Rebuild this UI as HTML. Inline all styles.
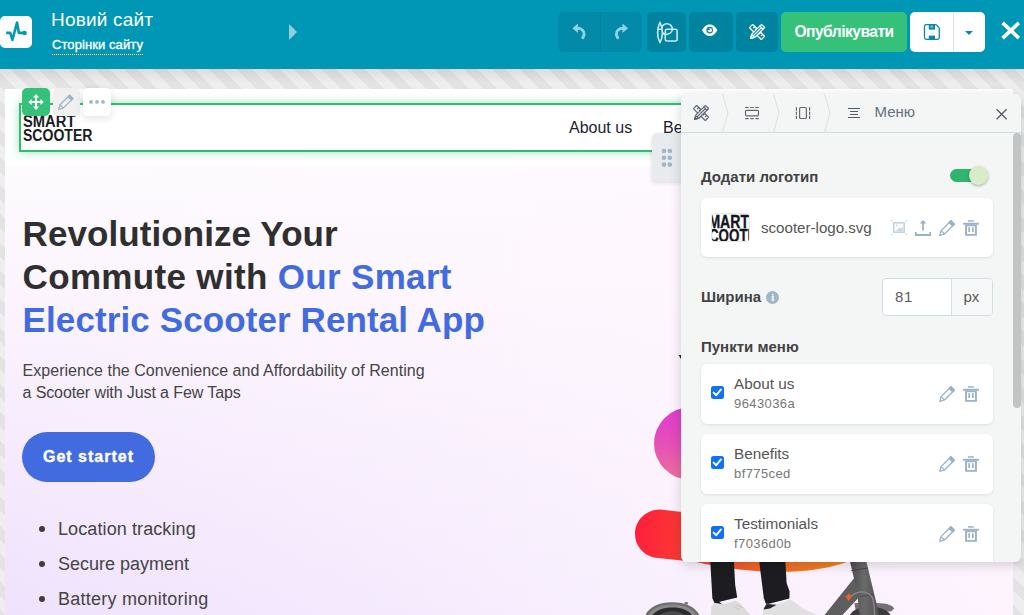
<!DOCTYPE html>
<html lang="uk">
<head>
<meta charset="utf-8">
<title>Новий сайт</title>
<style>
*{box-sizing:border-box;margin:0;padding:0}
html,body{width:1024px;height:615px;overflow:hidden}
body{position:relative;font-family:"Liberation Sans",sans-serif;background:#e9e9e9;color:#333}
.abs{position:absolute}
svg{display:block;overflow:visible}

/* ---------- striped canvas ---------- */
#canvas{left:0;top:69px;width:1024px;height:555.2px;
  background:repeating-linear-gradient(45deg,#e3e3e3 0 10px,#eeeeee 10px 20px)}
#canvas-shade{left:0;top:69px;width:1024px;height:14px;
  background:linear-gradient(180deg,rgba(0,0,0,.075),rgba(0,0,0,0))}

/* ---------- top bar ---------- */
#topbar{left:0;top:0;width:1024px;height:69px;background:#0097b7}
#brand{left:0;top:16px;width:32px;height:32px;background:#fff;border-radius:5px}
#site-title{left:51px;top:9px;font-size:19px;line-height:22px;color:#fff;white-space:nowrap;letter-spacing:.2px}
#site-pages{left:52px;top:37px;font-size:13px;line-height:15px;color:#fff;white-space:nowrap;
  letter-spacing:.08px;-webkit-text-stroke:.35px #fff}
#site-pages-line{left:52px;top:54px;width:91px;height:0;border-top:1px dotted #fff}
#tri{left:289px;top:24px;width:0;height:0;border-left:8px solid #8fd0df;border-top:8px solid transparent;border-bottom:8px solid transparent}
.tb{top:12px;height:40px;border-radius:5px}
#b-undo{left:558px;width:84px;background:#028aa8}
#b-undo-div{left:600px;top:12px;width:1px;height:40px;background:#02819d}
#b-theme{left:647px;width:39px;background:#00839f}
#b-eye{left:689px;width:44px;background:#00839f}
#b-design{left:736px;width:42px;background:#00839f}
#b-pub{left:781px;width:126px;background:#36c17a;color:#fff;font-weight:bold;font-size:15.6px;line-height:39px;
  text-align:center;letter-spacing:-.52px;padding-left:0}
#b-save{left:910px;width:75px;background:#fff}
#b-save-div{left:953px;top:13px;width:1px;height:38px;background:#dfe3e6}
#caret{left:965px;top:31px;width:0;height:0;border-top:4.5px solid #0a88a6;border-left:4.5px solid transparent;border-right:4.5px solid transparent}

/* ---------- page ---------- */
#page{left:5px;top:89px;width:1008px;height:526px;background:#fff;overflow:hidden}
#hero{left:0;top:77px;width:1008px;height:449px;
  background:linear-gradient(90deg,rgba(255,248,254,0) 0%,rgba(255,248,254,.58) 60%,rgba(255,247,254,.85) 100%),
    linear-gradient(180deg,#fdfbfe 0%,#fbf4fd 30%,#f6ebfd 62%,#efe2fd 100%)}
#sel{left:19px;top:103px;width:680px;height:49px;border:2px solid #2fbf71;background:#fff;
  box-shadow:0 0 9px rgba(47,191,113,.45)}
#logo{left:22.9px;top:115.2px;font-weight:bold;font-size:15.8px;line-height:13.5px;color:#1b1b25;white-space:nowrap}
#logo span{display:block;transform-origin:0 0}
.nav{top:118px;font-size:16px;line-height:19px;color:#1d1d33;white-space:nowrap}
#h1{left:22.6px;top:211.6px;font-weight:bold;font-size:35px;line-height:43.2px;color:#2f2f2f;white-space:nowrap}
#h1 span{display:block}
#h1 b{color:#436be0}
#lead{left:22.5px;top:359.5px;font-size:16px;line-height:22px;color:#444;white-space:nowrap}
#cta{left:22px;top:432px;width:133px;height:49.5px;border-radius:25px;background:#436be0;color:#fff;
  font-weight:bold;font-size:16px;line-height:49px;text-align:center;letter-spacing:1px;-webkit-text-stroke:.4px #fff}
#feat{left:58px;top:511.5px;font-size:18px;line-height:35px;color:#444;white-space:nowrap;list-style:none}
.dot{left:38.5px;width:6px;height:6px;border-radius:50%;background:#3d3d3d}

/* ---------- toolbar over block ---------- */
#t-move{left:22px;top:88px;width:28px;height:28px;border-radius:5px;background:#36c17a}
#t-edit{left:53px;top:88px;width:27px;height:28px;border-radius:5px;background:#f0f0f0}
#t-more{left:83px;top:88px;width:28px;height:28px;border-radius:5px;background:#fff;box-shadow:0 2px 8px rgba(0,0,0,.12)}

/* ---------- side panel ---------- */
#handle{left:652px;top:133px;width:34px;height:48.7px;border-radius:6px 0 0 3px;background:#e7ebed;
  box-shadow:0 1px 4px rgba(0,0,0,.13)}
#panel{left:681px;top:94px;width:340px;height:468px;border-radius:6px;background:#f4f6f6;overflow:hidden;
  box-shadow:0 3px 12px rgba(0,0,0,.17)}
#ph-line{left:0;top:38px;width:340px;height:1px;background:#cfe0e4}
#p-title{left:193.5px;top:8.8px;font-size:15px;line-height:18px;color:#64707d;white-space:nowrap}
.lbl{left:20px;font-weight:bold;font-size:15px;line-height:18px;color:#424242;white-space:nowrap}
.card{left:20px;width:291.5px;background:#fff;border-radius:6px;box-shadow:0 1px 3px rgba(0,0,0,.10)}
.it-t{left:33px;font-size:15.3px;line-height:18px;color:#555;white-space:nowrap}
.it-s{left:33px;font-size:13px;line-height:15px;color:#777;white-space:nowrap;letter-spacing:.4px}
.cb{left:9.7px;width:13px;height:13px;border-radius:2.5px;background:#0f72f5}
#scroll{left:332px;top:39px;width:8px;height:274.5px;border-radius:4px;background:#c1c4c4}
</style>
</head>
<body>

<div id="canvas" class="abs"></div>
<div id="canvas-shade" class="abs"></div>

<!-- ======= PAGE ======= -->
<div id="page" class="abs">
  <div id="hero" class="abs"></div>
  <!-- hero illustration (page-local coords: x-5, y-89) -->
  <svg class="abs" style="left:0;top:0" width="1008" height="526" viewBox="5 89 1008 526" fill="none">
    <defs>
      <linearGradient id="gPink" x1="0" y1="0" x2="0" y2="1">
        <stop offset="0" stop-color="#df3ccd"/><stop offset=".45" stop-color="#e54cbc"/><stop offset="1" stop-color="#ec709a"/>
      </linearGradient>
      <linearGradient id="gRed" gradientUnits="userSpaceOnUse" x1="636" y1="530" x2="860" y2="570">
        <stop offset="0" stop-color="#ff1f3d"/><stop offset=".28" stop-color="#f8432f"/><stop offset=".6" stop-color="#ef6a25"/><stop offset="1" stop-color="#ec8a1f"/>
      </linearGradient>
      <linearGradient id="gStem" x1="0" y1="0" x2="1" y2="0">
        <stop offset="0" stop-color="#4a4a4a"/><stop offset=".5" stop-color="#6a6a6a"/><stop offset="1" stop-color="#505050"/>
      </linearGradient>
    </defs>
    <circle cx="690.2" cy="443.5" r="36.2" fill="url(#gPink)"/>
    <path d="M678.6 355 L681.5 355 L681.5 360 Z" fill="#2a2326"/>
    <!-- tilted pill -->
    <path d="M660 509.6 C646 509.6 635 520.5 635 534 C635 545.2 642.6 554.6 653.5 557.4 L696 562 C730 569.5 760 572.6 790 571.8 C812 571 832 567.5 848 561.5 L850 520 L700 514 Z" fill="url(#gRed)"/>
    <!-- scooter front wheel -->
    <path d="M645.3 615 C649.5 606.5 659.5 602.3 672.3 602.3 C685 602.3 695 606.5 699.3 615 Z" fill="#6f6f6f"/>
    <path d="M648.5 615 C652.5 608.2 661 604.6 672.3 604.6 C683.6 604.6 692 608.2 696 615 Z" fill="#8a8a8a"/>
    <path d="M652.5 615 C656.5 610 663 607.4 672.3 607.4 C681.6 607.4 688 610 692 615 Z" fill="#2b2b2d"/>
    <path d="M660 615 C663 612.3 667 611.2 672.3 611.2 C677.6 611.2 681.6 612.3 684.6 615 Z" fill="#4a4a4c"/>
    <rect x="684.6" y="602" width="3.4" height="2.6" rx="1" fill="#777"/>
    <!-- scooter frame -->
    <path d="M854.3 603.3 C862 602.6 876 602.6 884 603.6 C889.5 604.4 893 606.2 894.2 608.6 L891 611.5 L856 612 Z" fill="#727272"/>
    <path d="M850 615 C853 609.5 860 606.8 870 606.8 C880 606.8 887.5 609.8 890.5 615 Z" fill="#3c3c3e"/>
    <path d="M855 577 L861.5 594.5 L842.5 615 L824.5 615 Z" fill="#5e5e5e"/>
    <path d="M849.6 560 L866 560 L876.4 603 L879 615 L859.5 615 L856.8 590 Z" fill="url(#gStem)"/>
    <path d="M851.2 570.6 L867.8 568" stroke="#454545" stroke-width=".9"/>
    <path d="M860 596.6 L873.6 594.4" stroke="#454545" stroke-width=".9"/>
    <path d="M850.6 597.2 C856 590.6 866 590 871.6 596.4 C873.6 599 874.4 606 874.6 615" stroke="#8a8a8a" stroke-width="1.3"/>
    <path d="M845.6 596.6 l3.6 -3.4 l2.6 3.4 l-3.2 4.6 Z" fill="#e4622c"/>
    <!-- legs -->
    <path d="M710.2 560 L733.8 560 L735.2 585 L737.2 597.4 L714.6 603 L712.4 598.6 Z" fill="#1c1c21"/>
    <path d="M759 560 L785.3 560 L786.6 583 L789.6 591.4 L789.4 598.6 L766.2 604.6 L763.8 598 Z" fill="#1c1c21"/>
    <!-- shoes -->
    <path d="M711 615 L711.4 606.4 L714.8 602.6 L718 604.6 C723 604.4 730 602.4 735.4 600.4 C738 601.2 740.4 603.6 743 606.4 C745.6 609.2 748 612 750.6 615 Z" fill="#dcdcdc"/>
    <path d="M714.4 602.8 L716.6 599.6 L722 604.2 Z" fill="#1c1c21"/>
    <path d="M763 615 L763.6 607.6 L766.8 603.6 L772 605.6 C778 604.8 784 602.4 789.6 599.6 C793 600.6 796 603.4 800 606.6 C806 610.6 812 613 817.4 615 Z" fill="#e0e0e0"/>
    <path d="M763.4 609.4 L766.4 604 L776.6 604.8 L770 608.6 Z" fill="#26262a"/>
    <path d="M736 604.6 l6.6 3.2 M733.4 606.6 l6.6 3.2" stroke="#c4c4c4" stroke-width=".9"/>
  </svg>

</div>

<div id="sel" class="abs"></div>
<div id="logo" class="abs"><span style="transform:scaleX(.933)">SMART</span><span style="transform:scaleX(.889)">SCOOTER</span></div>
<div class="abs nav" style="left:569px">About us</div>
<div class="abs nav" style="left:663px">Benefits</div>
<div class="abs nav" style="left:754px">Testimonials</div>

<div id="h1" class="abs"><span style="letter-spacing:.08px">Revolutionize Your</span><span style="letter-spacing:.33px">Commute with <b>Our Smart</b></span><span style="letter-spacing:.1px"><b>Electric Scooter Rental App</b></span></div>
<div id="lead" class="abs"><span style="letter-spacing:.04px">Experience the Convenience and Affordability of Renting</span><br><span style="letter-spacing:-.1px">a Scooter with Just a Few Taps</span></div>
<div id="cta" class="abs">Get startet</div>
<ul id="feat" class="abs"><li style="letter-spacing:.1px">Location tracking</li><li>Secure payment</li><li style="letter-spacing:.25px">Battery monitoring</li></ul>
<div class="abs dot" style="top:526px"></div>
<div class="abs dot" style="top:560.5px"></div>
<div class="abs dot" style="top:595.5px"></div>

<!-- block toolbar -->
<div id="t-edit" class="abs"></div>
<div id="t-more" class="abs"></div>
<div id="t-move" class="abs"></div>


<!-- block toolbar icons -->
<svg id="bt-icons" class="abs" style="left:0;top:80px" width="120" height="40" viewBox="0 80 120 40" fill="none">
  <!-- move -->
  <g fill="#fff">
    <rect x="35.1" y="96.5" width="1.9" height="11"/>
    <rect x="30.5" y="101.05" width="11" height="1.9"/>
    <path d="M36.05 94.1 L39.1 97.5 H33 Z"/>
    <path d="M36.05 109.9 L39.1 106.5 H33 Z"/>
    <path d="M28.3 102 L31.6 98.95 V105.05 Z"/>
    <path d="M43.8 102 L40.5 98.95 V105.05 Z"/>
  </g>
  <!-- pencil -->
  <g stroke="#9fb6c9" stroke-width="1.3" stroke-linejoin="round">
    <path d="M58.6 109.5 L60 104.8 L69.6 95.2 L72.9 98.5 L63.3 108.1 Z"/>
    <path d="M60 104.8 L63.3 108.1"/>
    <path d="M68 96.8 L71.3 100.1 L72.9 98.5 L69.6 95.2 Z" fill="#9fb6c9"/>
  </g>
  <!-- dots -->
  <g fill="#9fb6c9"><circle cx="91" cy="101.9" r="1.85"/><circle cx="97" cy="101.9" r="1.85"/><circle cx="103" cy="101.9" r="1.85"/></g>
</svg>

<!-- ======= TOP BAR ======= -->
<div id="topbar" class="abs"></div>
<div id="brand" class="abs"></div>
<div id="site-title" class="abs">Новий сайт</div>
<div id="site-pages" class="abs">Сторінки сайту</div>
<div id="site-pages-line" class="abs"></div>
<div id="tri" class="abs"></div>
<div id="b-undo" class="abs tb"></div>
<div id="b-undo-div" class="abs"></div>
<div id="b-theme" class="abs tb"></div>
<div id="b-eye" class="abs tb"></div>
<div id="b-design" class="abs tb"></div>
<div id="b-pub" class="abs tb">Опублікувати</div>
<div id="b-save" class="abs tb"></div>
<div id="b-save-div" class="abs"></div>
<div id="caret" class="abs"></div>


<!-- top bar icons -->
<svg id="tb-icons" class="abs" style="left:0;top:0" width="1024" height="69" viewBox="0 0 1024 69" fill="none">
  <!-- brand pulse -->
  <g stroke="#0597b6" stroke-width="2.6" stroke-linejoin="round" stroke-linecap="butt">
    <path d="M6.2 32.9 H10.3 L12.4 40 L17 22.6 L18.9 32.9 H23.5"/>
  </g>
  <circle cx="24.6" cy="33" r="2.3" fill="#0597b6"/>
  <!-- undo -->
  <g id="undo">
    <path d="M577.4 28.3 C581.6 28.3 584.3 30.9 584.1 34.2 C584 35.6 583.5 36.8 582.7 37.7" stroke="#8fd3e0" stroke-width="2.9" stroke-linecap="round"/>
    <path d="M572.4 28.3 L578 23.6 V33 Z" fill="#8fd3e0"/>
  </g>
  <g transform="translate(1200.5 0) scale(-1 1)">
    <path d="M577.4 28.3 C581.6 28.3 584.3 30.9 584.1 34.2 C584 35.6 583.5 36.8 582.7 37.7" stroke="#8fd3e0" stroke-width="2.9" stroke-linecap="round"/>
    <path d="M572.4 28.3 L578 23.6 V33 Z" fill="#8fd3e0"/>
  </g>
  <!-- theme: brush + shapes -->
  <g stroke="#c9e9f0" stroke-width="1.6" stroke-linejoin="round">
    <circle cx="666.9" cy="29.2" r="5.5"/>
    <rect x="665.3" y="29.3" width="11.8" height="11.7" rx="1.6" fill="#00839f"/>
    <path d="M665.3 34.5 C669.2 34.4 672.2 32.2 672.4 29.3" />
    <path d="M660 22.3 C658.1 25.8 657.6 29.6 657.6 33 C657.6 36.8 658.6 40 660 42.6 C661.4 40 662.4 36.8 662.4 33 C662.4 29.6 661.9 25.8 660 22.3 Z" fill="#00839f"/>
    <path d="M657.6 28.6 C659 29.4 661 29.4 662.4 28.6"/>
  </g>
  <!-- eye -->
  <path d="M702 30.2 C704.4 25.6 707.2 24.4 709.7 24.4 C712.2 24.4 715 25.6 717.4 30.2 C715 34.8 712.2 36 709.7 36 C707.2 36 704.4 34.8 702 30.2 Z" fill="#fff"/>
  <circle cx="709.7" cy="30.1" r="3.35" fill="#00839f"/>
  <circle cx="709.9" cy="30.2" r="2.1" fill="#fff"/>
  <circle cx="708.9" cy="29.2" r="1" fill="#00839f"/>
  <!-- design: ruler + pencil -->
  <g stroke="#fff" stroke-width="1.4" stroke-linejoin="round" stroke-linecap="round" transform="translate(757 32) scale(.86) translate(-757 -32)">
    <g transform="rotate(45 757 32)">
      <rect x="747.2" y="29.3" width="19.6" height="5.4" rx=".6" fill="#00839f"/>
      <path d="M750.6 29.3 v2.2 M753.8 29.3 v2.2 M760.4 29.3 v2.2 M763.6 29.3 v2.2"/>
    </g>
    <g transform="rotate(-45 757 32)">
      <path d="M750.6 29.4 H767 V34.6 H750.6 L746.4 32 Z" fill="#00839f"/>
      <path d="M750.6 29.4 V34.6 M751 32 H764.4 M764.4 29.4 V34.6"/>
      <path d="M746.4 32 L748.6 30.6 V33.4 Z" fill="#fff"/>
    </g>
  </g>
  <!-- save -->
  <g stroke="#0a88a6" stroke-width="1.3" stroke-linejoin="round">
    <path d="M926.2 24.6 H936 L939.3 27.9 V37.6 Q939.3 39.4 937.5 39.4 H926.2 Q924.5 39.4 924.5 37.6 V26.3 Q924.5 24.6 926.2 24.6 Z" fill="#fff"/>
  </g>
  <rect x="928.8" y="24.6" width="6.2" height="5" fill="#0a88a6"/>
  <rect x="930.4" y="25.6" width="2.6" height="2" fill="#7fc4d6"/>
  <rect x="928.8" y="35.6" width="6.2" height="3.8" fill="#0a88a6"/>
  <!-- close -->
  <path d="M1002.6 22.9 L1018.9 38.1 M1018.9 22.9 L1002.6 38.1" stroke="#fff" stroke-width="3.6"/>
</svg>

<!-- ======= SIDE PANEL ======= -->
<div id="handle" class="abs"></div>
<svg class="abs" style="left:656px;top:145px" width="20" height="26" viewBox="656 145 20 26"><g fill="#9fb6c9"><circle cx="664" cy="151" r="2.3"/><circle cx="669.8" cy="151" r="2.3"/><circle cx="664" cy="157.8" r="2.3"/><circle cx="669.8" cy="157.8" r="2.3"/><circle cx="664" cy="164.6" r="2.3"/><circle cx="669.8" cy="164.6" r="2.3"/></g></svg>
<div id="panel" class="abs">
  <div id="ph-line" class="abs"></div>
  <!-- panel header icons (panel-local coords: x-681, y-94) -->
  <svg class="abs" style="left:0;top:0" width="340" height="40" viewBox="681 94 340 40" fill="none">
    <g stroke="#d3e2e6" stroke-width="1" stroke-linejoin="miter">
      <path d="M722.5 94 L728 113 L722.5 132.5"/>
      <path d="M773.5 94 L779 113 L773.5 132.5"/>
      <path d="M824.5 94 L830 113 L824.5 132.5"/>
    </g>
    <!-- design -->
    <g stroke="#5d6872" stroke-width="1.35" stroke-linejoin="round" stroke-linecap="round" transform="translate(701 113) scale(.86) translate(-701 -113)">
      <g transform="rotate(45 701 113)">
        <rect x="691.2" y="110.3" width="19.6" height="5.4" rx=".6" fill="#f4f6f6"/>
        <path d="M694.6 110.3 v2.2 M697.8 110.3 v2.2 M704.4 110.3 v2.2 M707.6 110.3 v2.2"/>
      </g>
      <g transform="rotate(-45 701 113)">
        <path d="M694.6 110.4 H711 V115.6 H694.6 L690.4 113 Z" fill="#f4f6f6"/>
        <path d="M694.6 110.4 V115.6 M695 113 H708.4 M708.4 110.4 V115.6"/>
        <path d="M690.4 113 L692.6 111.6 V114.4 Z" fill="#5d6872"/>
      </g>
    </g>
    <!-- section -->
    <g stroke="#5d6872" stroke-width="1.2" stroke-linecap="round">
      <path d="M745.6 107.5 H748.2 M750.7 107.5 H753.3 M755.8 107.5 H758.4"/>
      <rect x="745.5" y="110.3" width="13" height="5.6" rx="1.3"/>
      <path d="M745.6 118.6 H748.2 M750.7 118.6 H753.3 M755.8 118.6 H758.4"/>
    </g>
    <!-- column -->
    <g stroke="#5d6872" stroke-width="1.2" stroke-linecap="round">
      <path d="M796.4 107.6 V110.2 M796.4 112 V114.2 M796.4 116 V118.4"/>
      <rect x="799.6" y="107.5" width="6.8" height="11" rx="1.3"/>
      <path d="M809.6 107.6 V110.2 M809.6 112 V114.2 M809.6 116 V118.4"/>
    </g>
    <!-- menu -->
    <g stroke="#4f5c68" stroke-width="1.05">
      <path d="M848 108.5 H860 M850 111.5 H858 M850 114.5 H858 M848 117.4 H860"/>
    </g>
    <!-- close -->
    <path d="M996.6 109.3 L1006.6 119.2 M1006.6 109.3 L996.6 119.2" stroke="#4f5868" stroke-width="1.25"/>
  </svg>

  <div id="p-title" class="abs">Меню</div>


  <!-- toggle -->
  <div class="abs" style="left:268.5px;top:74.5px;width:36px;height:13.5px;border-radius:7px;background:#2fb56e"></div>
  <div class="abs" style="left:288.3px;top:72px;width:18.7px;height:18.7px;border-radius:50%;background:#d9ecc8;box-shadow:0 1px 3px rgba(0,0,0,.3)"></div>
  <div class="abs lbl" style="top:74px">Додати логотип</div>
  <div class="abs card" style="top:104px;height:59px"></div>

  <!-- logo thumbnail -->
  <div class="abs" style="left:30px;top:119px;width:39px;height:29px;border-radius:3px;border:1px solid #dfe9ec;background:#fff;overflow:hidden">
    <div class="abs" style="left:-12.6px;top:1.4px;font-weight:bold;font-size:17.6px;line-height:14.1px;color:#15151d;white-space:nowrap;-webkit-text-stroke:.35px #15151d"><span style="display:block;transform:scaleX(.8);transform-origin:0 0">SMART</span><span style="display:block;transform:scaleX(.76);transform-origin:0 0;margin-left:1px">SCOOTER</span></div>
  </div>
  <svg class="abs" style="left:200px;top:120px" width="110" height="24" viewBox="881 214 110 24" fill="none">
    <!-- image -->
    <g stroke="#c6d4de" stroke-width="1.7">
      <rect x="893.8" y="222.8" width="10.4" height="9.4"/>
      <path d="M891.3 221.6 V220.4 H892.6 M905.4 220.4 H906.7 V221.6 M891.3 233.4 V234.6 H892.6 M905.4 234.6 H906.7 V233.4" stroke-width="1"/>
    </g>
    <path d="M896 231 L899.3 227.4 L900.8 229 L902.8 226.4 V231 Z" fill="#c6d4de"/>
    <rect x="896" y="224.6" width="1.6" height="1.6" fill="#c6d4de"/>
    <!-- upload -->
    <g stroke="#9ab2c6" stroke-width="1.8" stroke-linejoin="miter">
      <path d="M915.8 232 V235 H930.2 V232"/>
      <path d="M923 230.6 V221.4"/>
    </g>
    <path d="M923 219.9 L926.3 223.6 H919.7 Z" fill="#9ab2c6"/>
    <!-- pencil -->
    <g stroke="#9ab2c6" stroke-width="1.3" stroke-linejoin="round">
      <path d="M939.7 235.4 L941.1 230.6 L950.9 220.8 L954.3 224.2 L944.5 234 Z"/>
      <path d="M941.1 230.6 L944.5 234"/>
      <path d="M949.2 222.5 L952.6 225.9 L954.3 224.2 L950.9 220.8 Z" fill="#9ab2c6"/>
    </g>
    <!-- trash -->
    <g fill="#9ab2c6">
      <rect x="968" y="220.2" width="5.8" height="1.5"/>
      <rect x="963.1" y="222.8" width="15.8" height="1.9"/>
      <path d="M965.1 224.6 H976.9 V235.8 H965.1 Z M967 226.2 V233.9 H975 V226.2 Z" fill-rule="evenodd"/>
      <rect x="968.3" y="227.2" width="1.7" height="4.8"/>
      <rect x="972" y="227.2" width="1.7" height="4.8"/>
    </g>
  </svg>
  <div class="abs it-t" style="left:80px;top:125px;font-size:15.1px">scooter-logo.svg</div>


  <!-- info -->
  <div class="abs" style="left:85.2px;top:197px;width:13px;height:13px;border-radius:50%;background:#9fb6c9;color:#fff;font-family:'Liberation Serif',serif;font-weight:bold;font-size:10.5px;line-height:13px;text-align:center">i</div>
  <!-- width input -->
  <div class="abs" style="left:201px;top:184px;width:110.5px;height:38px;border:1px solid #cfe0e4;border-radius:4px;background:#fff;overflow:hidden">
    <div class="abs" style="left:68px;top:0;width:41px;height:36px;background:#f7f8fa;border-left:1px solid #cfe0e4"></div>
    <div class="abs" style="left:12px;top:8.5px;font-size:15px;line-height:18px;color:#5a5a5a;letter-spacing:.6px">81</div>
    <div class="abs" style="left:80.5px;top:8.5px;font-size:15px;line-height:18px;color:#5a5a5a">px</div>
  </div>
  <div class="abs lbl" style="top:194px">Ширина</div>
  <div class="abs lbl" style="top:243.5px">Пункти меню</div>

  <div class="abs card" style="top:270px;height:60px">
    <div class="abs cb" style="top:22px"></div>
    <svg class="abs" style="left:7px;top:18px" width="20" height="20" viewBox="0 0 20 20" fill="none"><path d="M5.6 10.6 L8.3 13.2 L13 7.4" stroke="#fff" stroke-width="1.9" stroke-linecap="round" stroke-linejoin="round"/></svg>
    <svg class="abs" style="left:230px;top:16px" width="60" height="24" viewBox="931 380 60 24" fill="none">
      <g stroke="#9ab2c6" stroke-width="1.3" stroke-linejoin="round">
        <path d="M939.7 401.4 L941.1 396.6 L950.9 386.8 L954.3 390.2 L944.5 400 Z"/>
        <path d="M941.1 396.6 L944.5 400"/>
        <path d="M949.2 388.5 L952.6 391.9 L954.3 390.2 L950.9 386.8 Z" fill="#9ab2c6"/>
      </g>
      <g fill="#9ab2c6">
        <rect x="968" y="386.2" width="5.8" height="1.5"/>
        <rect x="963.1" y="388.8" width="15.8" height="1.9"/>
        <path d="M965.1 390.6 H976.9 V401.8 H965.1 Z M967 392.2 V399.9 H975 V392.2 Z" fill-rule="evenodd"/>
        <rect x="968.3" y="393.2" width="1.7" height="4.8"/>
        <rect x="972" y="393.2" width="1.7" height="4.8"/>
      </g>
    </svg>

    <div class="abs it-t" style="top:11px">About us</div>
    <div class="abs it-s" style="top:32px">9643036a</div>
  </div>
  <div class="abs card" style="top:340px;height:60px">
    <div class="abs cb" style="top:22px"></div>
    <svg class="abs" style="left:7px;top:18px" width="20" height="20" viewBox="0 0 20 20" fill="none"><path d="M5.6 10.6 L8.3 13.2 L13 7.4" stroke="#fff" stroke-width="1.9" stroke-linecap="round" stroke-linejoin="round"/></svg>
    <svg class="abs" style="left:230px;top:16px" width="60" height="24" viewBox="931 380 60 24" fill="none">
      <g stroke="#9ab2c6" stroke-width="1.3" stroke-linejoin="round">
        <path d="M939.7 401.4 L941.1 396.6 L950.9 386.8 L954.3 390.2 L944.5 400 Z"/>
        <path d="M941.1 396.6 L944.5 400"/>
        <path d="M949.2 388.5 L952.6 391.9 L954.3 390.2 L950.9 386.8 Z" fill="#9ab2c6"/>
      </g>
      <g fill="#9ab2c6">
        <rect x="968" y="386.2" width="5.8" height="1.5"/>
        <rect x="963.1" y="388.8" width="15.8" height="1.9"/>
        <path d="M965.1 390.6 H976.9 V401.8 H965.1 Z M967 392.2 V399.9 H975 V392.2 Z" fill-rule="evenodd"/>
        <rect x="968.3" y="393.2" width="1.7" height="4.8"/>
        <rect x="972" y="393.2" width="1.7" height="4.8"/>
      </g>
    </svg>

    <div class="abs it-t" style="top:11px">Benefits</div>
    <div class="abs it-s" style="top:32px">bf775ced</div>
  </div>
  <div class="abs card" style="top:410px;height:80px">
    <div class="abs cb" style="top:22px"></div>
    <svg class="abs" style="left:7px;top:18px" width="20" height="20" viewBox="0 0 20 20" fill="none"><path d="M5.6 10.6 L8.3 13.2 L13 7.4" stroke="#fff" stroke-width="1.9" stroke-linecap="round" stroke-linejoin="round"/></svg>
    <svg class="abs" style="left:230px;top:16px" width="60" height="24" viewBox="931 380 60 24" fill="none">
      <g stroke="#9ab2c6" stroke-width="1.3" stroke-linejoin="round">
        <path d="M939.7 401.4 L941.1 396.6 L950.9 386.8 L954.3 390.2 L944.5 400 Z"/>
        <path d="M941.1 396.6 L944.5 400"/>
        <path d="M949.2 388.5 L952.6 391.9 L954.3 390.2 L950.9 386.8 Z" fill="#9ab2c6"/>
      </g>
      <g fill="#9ab2c6">
        <rect x="968" y="386.2" width="5.8" height="1.5"/>
        <rect x="963.1" y="388.8" width="15.8" height="1.9"/>
        <path d="M965.1 390.6 H976.9 V401.8 H965.1 Z M967 392.2 V399.9 H975 V392.2 Z" fill-rule="evenodd"/>
        <rect x="968.3" y="393.2" width="1.7" height="4.8"/>
        <rect x="972" y="393.2" width="1.7" height="4.8"/>
      </g>
    </svg>

    <div class="abs it-t" style="top:11px">Testimonials</div>
    <div class="abs it-s" style="top:32px">f7036d0b</div>
  </div>
  <div id="scroll" class="abs"></div>
</div>

</body>
</html>
